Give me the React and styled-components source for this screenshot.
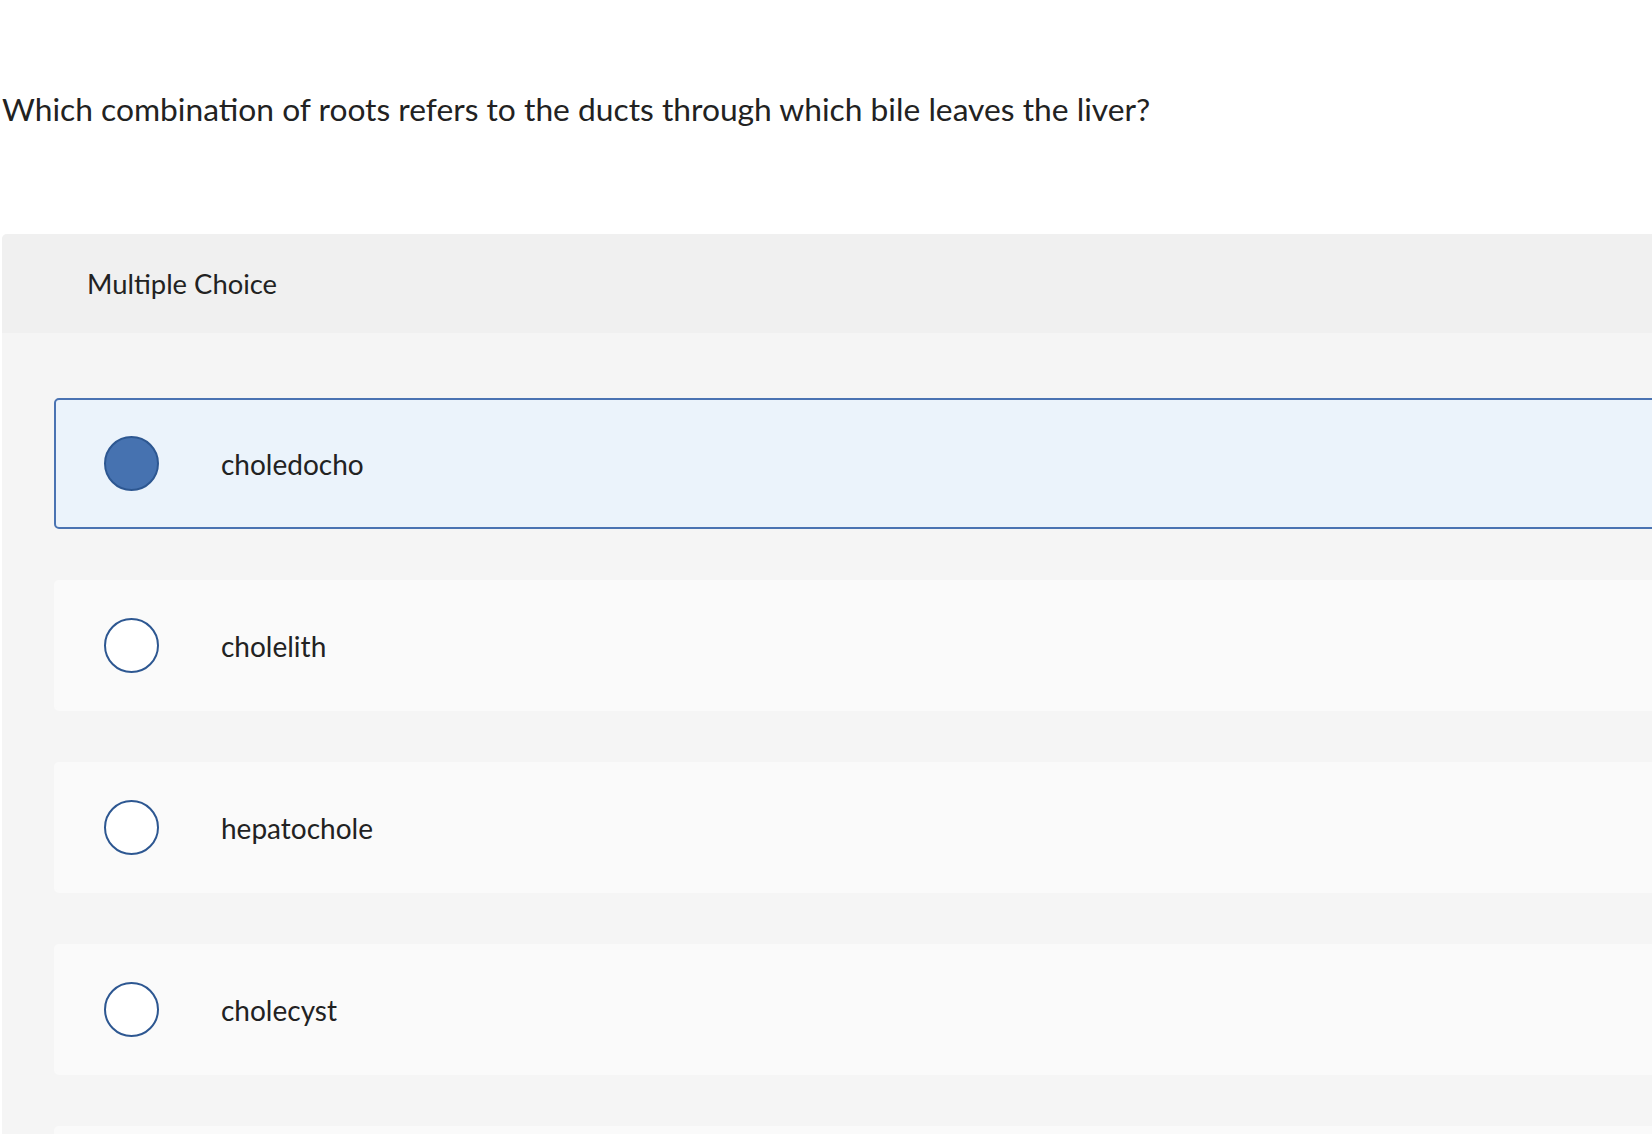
import styled, { createGlobalStyle } from "styled-components";

//------------------------------------------------------------------------

const GlobalStyle = createGlobalStyle`
    html, body {
        margin: 0;
        padding: 0;
        background: #ffffff;
        overflow: hidden;
    }

    body {
        font-family: "Lato", "Liberation Sans", sans-serif;
        color: #222222;
    }
`;

const Page = styled.div`
    width: 1652px;
    height: 1134px;
    overflow: hidden;
    padding-left: 2px;
    box-sizing: border-box;
`;

const Question = styled.p`
    margin: 0;
    padding-top: 89px;
    height: 234px;
    box-sizing: border-box;

    font-size: 31.75px;
    line-height: 40px;
    color: #222222;
`;

const Panel = styled.section`
    width: 1720px;
    background: #f5f5f5;
    border-radius: 5px 0 0 0;
    overflow: hidden;
`;

const PanelHeader = styled.header`
    display: flex;
    align-items: center;

    height: 99px;
    padding-left: 85px;

    background: #f0f0f0;

    font-size: 27.4px;
    color: #222222;
`;

const OptionList = styled.div`
    display: flex;
    flex-direction: column;
    gap: 51px;

    padding: 65px 0 0 52px;
`;

const Option = styled.label`
    display: flex;
    align-items: center;

    height: 131px;
    padding-left: 48px;
    box-sizing: border-box;

    background: ${({ $selected }) => ($selected ? "#ebf3fb" : "#fafafa")};
    border: 2px solid ${({ $selected }) => ($selected ? "#4a73b2" : "#fafafa")};
    border-radius: 5px;

    font-size: 28px;
    color: #222222;
`;

const Radio = styled.span`
    flex: none;
    width: 55px;
    height: 55px;
    box-sizing: border-box;

    border-radius: 50%;
    border: 2px solid #2d5791;
    background: ${({ $selected }) => ($selected ? "#4672b0" : "#ffffff")};

    margin-right: 62px;
`;

//------------------------------------------------------------------------

const options = [
    { text: "choledocho", selected: true },
    { text: "cholelith", selected: false },
    { text: "hepatochole", selected: false },
    { text: "cholecyst", selected: false },
    { text: "", selected: false },
];

function App() {
    return (
        <Page>
            <GlobalStyle />
            <Question>
                Which combination of roots refers to the ducts through which
                bile leaves the liver?
            </Question>
            <Panel>
                <PanelHeader>Multiple Choice</PanelHeader>
                <OptionList>
                    {options.map((option, index) => (
                        <Option key={index} $selected={option.selected}>
                            <Radio $selected={option.selected} />
                            <span>{option.text}</span>
                        </Option>
                    ))}
                </OptionList>
            </Panel>
        </Page>
    );
}

export default App;
